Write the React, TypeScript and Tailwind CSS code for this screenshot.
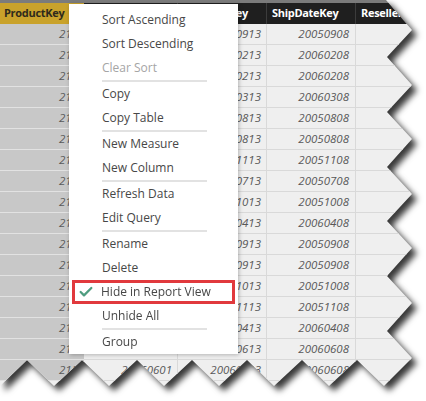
import { Check } from 'lucide-react'

const shipDates = [
  '20050908', '20060208', '20060208', '20060308', '20050808', '20050808',
  '20051108', '20050708', '20051008', '20060408', '20050908', '20050908',
  '20051008', '20051108', '20060408', '20060608', '20060608',
]
const productKeys = ['214', '217', '214', '217', '219', '214', '217', '218', '214', '219', '217', '214', '218', '214', '217', '214', '215']

const rows = shipDates.map((ship, i) => ({
  product: productKeys[i],
  order: ship.slice(0, 6) + '01',
  due: ship.slice(0, 6) + '13',
  ship,
}))

type MenuEntry = { label: string; disabled?: boolean; checked?: boolean } | 'sep'

const menu: MenuEntry[] = [
  { label: 'Sort Ascending' },
  { label: 'Sort Descending' },
  { label: 'Clear Sort', disabled: true },
  'sep',
  { label: 'Copy' },
  { label: 'Copy Table' },
  'sep',
  { label: 'New Measure' },
  { label: 'New Column' },
  'sep',
  { label: 'Refresh Data' },
  { label: 'Edit Query' },
  'sep',
  { label: 'Rename' },
  { label: 'Delete' },
  { label: 'Hide in Report View', checked: true },
  { label: 'Unhide All' },
  'sep',
  { label: 'Group' },
]

const torn =
  '[clip-path:polygon(0_0,386px_0,412px_30px,387px_57px,412px_85px,387px_112px,412px_139px,387px_167px,412px_194px,387px_221px,412px_248px,387px_276px,412px_303px,387px_331px,412px_358px,384px_386px,357px_360px,329px_386px,302px_360px,274px_386px,247px_360px,219px_386px,192px_360px,164px_386px,137px_360px,109px_386px,82px_360px,54px_386px,27px_360px,0_386px)]'

function ContextMenu() {
  return (
    <div className="absolute left-[69px] top-[4px] w-[169px] bg-white pt-[4px] font-['Open_Sans',sans-serif] text-[12px] text-[#474747] shadow-[1px_1px_4px_rgba(0,0,0,0.25)]">
      {menu.map((entry, i) => {
        if (entry === 'sep') {
          return <div key={i} className="ml-[33px] mr-[31px] h-[2px] bg-[#e2e2e2]" />
        }
        if (entry.checked) {
          return (
            <div key={i} className="mx-[3px] flex h-6 items-center border-[3px] border-[#e1393d] pl-[3px]">
              <Check className="h-4 w-4 text-[#4f9d80]" strokeWidth={3.4} />
              <span className="ml-[7px]">{entry.label}</span>
            </div>
          )
        }
        return (
          <div key={i} className={`flex h-6 items-center pl-[33px] ${entry.disabled ? 'text-[#a5a5a5]' : ''}`}>
            {entry.label}
          </div>
        )
      })}
    </div>
  )
}

export default function App() {
  return (
    <div className="h-[401px] w-[426px] overflow-hidden bg-white">
      <div className="[filter:drop-shadow(5px_5px_3px_rgba(0,0,0,0.78))]">
        <div className={`relative h-[390px] bg-[#efefef] ${torn}`}>
          <div className="h-[3px] bg-[#7b7b7b]" />
          <div className="grid h-[21px] grid-cols-[84px_94px_89px_89px_1fr] bg-[#1f1f1f] font-['Open_Sans',sans-serif] text-[11px] font-bold tracking-[-0.3px] text-white">
            <div className="flex items-center bg-[#c9a22b] pl-[4px] text-[#2e2a1c]">ProductKey</div>
            <div className="flex items-center border-r border-[#3c3c3c] pl-[5px]">OrderDateKey</div>
            <div className="flex items-center border-r border-[#3c3c3c] pl-[5px]">DueDateKey</div>
            <div className="flex items-center border-r border-[#3c3c3c] pl-[5px]">ShipDateKey</div>
            <div className="flex items-center pl-[5px]">ResellerKey</div>
          </div>
          {rows.map((r, i) => (
            <div
              key={i}
              className="grid h-[21px] grid-cols-[84px_94px_89px_89px_1fr] font-['Open_Sans',sans-serif] text-[11.5px] italic text-[#585858]"
            >
              <div className="flex items-center justify-end border-b border-[#e2e2e2] bg-[#c8c8c8] pr-[6px]">{r.product}</div>
              <div className="flex items-center justify-end border-b border-r border-[#d9d9d9] pr-[5px]">{r.order}</div>
              <div className="flex items-center justify-end border-b border-r border-[#d9d9d9] pr-[5px]">{r.due}</div>
              <div className="flex items-center justify-end border-b border-r border-[#d9d9d9] pr-[6px]">{r.ship}</div>
              <div className="border-b border-[#d9d9d9]" />
            </div>
          ))}
          <ContextMenu />
        </div>
      </div>
    </div>
  )
}
